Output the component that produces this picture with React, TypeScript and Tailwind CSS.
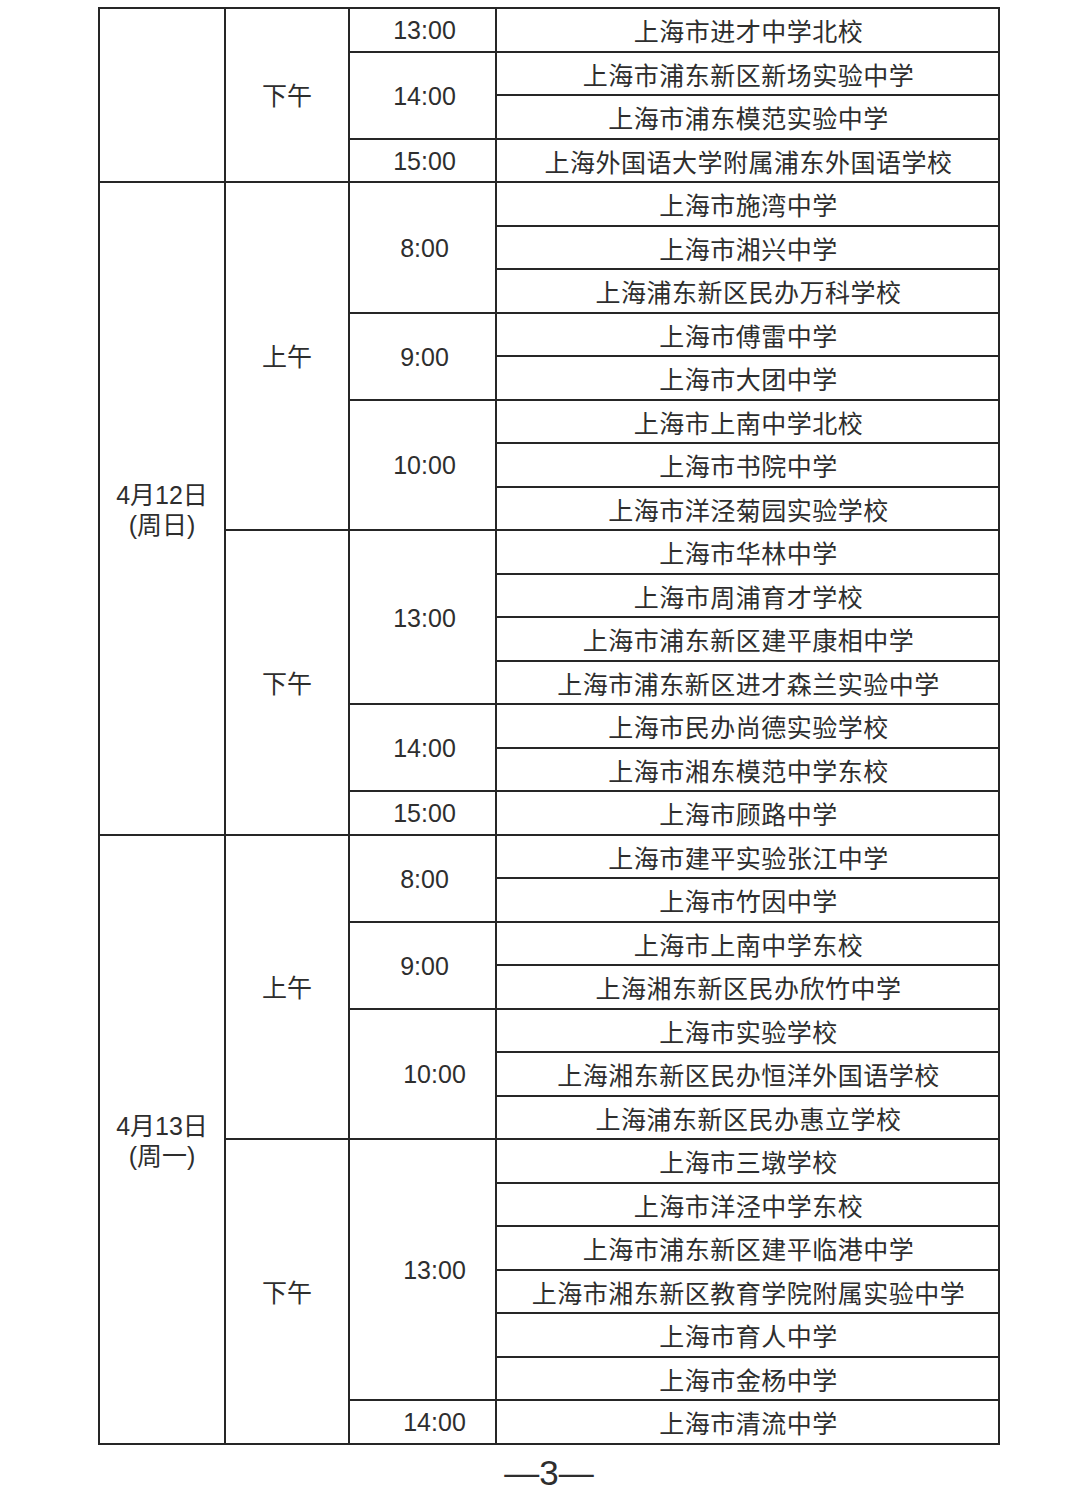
type TimeBlock = { time: string; schools: string[]; shift?: boolean };
type Period = { label: string; times: TimeBlock[] };
type Day = { date?: [string, string]; periods: Period[] };

const DAYS: Day[] = [
  {
    periods: [
      {
        label: "下午",
        times: [
          { time: "13:00", schools: ["上海市进才中学北校"] },
          { time: "14:00", schools: ["上海市浦东新区新场实验中学", "上海市浦东模范实验中学"] },
          { time: "15:00", schools: ["上海外国语大学附属浦东外国语学校"] },
        ],
      },
    ],
  },
  {
    date: ["4月12日", "(周日)"],
    periods: [
      {
        label: "上午",
        times: [
          { time: "8:00", schools: ["上海市施湾中学", "上海市湘兴中学", "上海浦东新区民办万科学校"] },
          { time: "9:00", schools: ["上海市傅雷中学", "上海市大团中学"] },
          { time: "10:00", schools: ["上海市上南中学北校", "上海市书院中学", "上海市洋泾菊园实验学校"] },
        ],
      },
      {
        label: "下午",
        times: [
          {
            time: "13:00",
            schools: [
              "上海市华林中学",
              "上海市周浦育才学校",
              "上海市浦东新区建平康相中学",
              "上海市浦东新区进才森兰实验中学",
            ],
          },
          { time: "14:00", schools: ["上海市民办尚德实验学校", "上海市湘东模范中学东校"] },
          { time: "15:00", schools: ["上海市顾路中学"] },
        ],
      },
    ],
  },
  {
    date: ["4月13日", "(周一)"],
    periods: [
      {
        label: "上午",
        times: [
          { time: "8:00", schools: ["上海市建平实验张江中学", "上海市竹因中学"] },
          { time: "9:00", schools: ["上海市上南中学东校", "上海湘东新区民办欣竹中学"] },
          {
            time: "10:00",
            shift: true,
            schools: ["上海市实验学校", "上海湘东新区民办恒洋外国语学校", "上海浦东新区民办惠立学校"],
          },
        ],
      },
      {
        label: "下午",
        times: [
          {
            time: "13:00",
            shift: true,
            schools: [
              "上海市三墩学校",
              "上海市洋泾中学东校",
              "上海市浦东新区建平临港中学",
              "上海市湘东新区教育学院附属实验中学",
              "上海市育人中学",
              "上海市金杨中学",
            ],
          },
          { time: "14:00", shift: true, schools: ["上海市清流中学"] },
        ],
      },
    ],
  },
];

export default function App() {
  return (
    <div
      className="min-h-[1495px] w-[1080px] bg-white pt-[7px] text-[#2e2e2e]"
      style={{ fontFamily: '"Liberation Sans", "Noto Sans CJK SC", sans-serif' }}
    >
      <div className="ml-[98px] flex w-[902px] flex-col gap-[2px] bg-[#262626] p-[2px]">
        {DAYS.map((day, di) => (
          <div key={di} className="flex gap-[2px]">
            <div className="flex w-[124px] flex-col items-center justify-center bg-white pt-[4px] text-[25px] leading-[30px]">
              {day.date && (
                <>
                  <span>{day.date[0]}</span>
                  <span>{day.date[1]}</span>
                </>
              )}
            </div>
            <div className="flex flex-1 flex-col gap-[2px]">
              {day.periods.map((p, pi) => (
                <div key={pi} className="flex gap-[2px]">
                  <div className="flex w-[122px] items-center justify-center bg-white pt-[4px] text-[25px]">
                    {p.label}
                  </div>
                  <div className="flex flex-1 flex-col gap-[2px]">
                    {p.times.map((t, ti) => (
                      <div key={ti} className="flex gap-[2px]">
                        <div
                          className={
                            t.shift
                              ? "flex w-[145px] items-center justify-center bg-white pt-[2px] pl-[24px] text-[25px] leading-none"
                              : "flex w-[145px] items-center justify-center bg-white pt-[2px] pl-[4px] text-[25px] leading-none"
                          }
                        >
                          {t.time}
                        </div>
                        <div className="flex flex-1 flex-col gap-[2px]">
                          {t.schools.map((s) => (
                            <div
                              key={s}
                              className="flex h-[41.5px] items-center justify-center bg-white pt-[6px] pl-[2px] text-[25px] leading-none tracking-[0.5px]"
                            >
                              {s}
                            </div>
                          ))}
                        </div>
                      </div>
                    ))}
                  </div>
                </div>
              ))}
            </div>
          </div>
        ))}
      </div>
      <div className="ml-[98px] mt-[10px] w-[902px] text-center text-[35px] leading-[35px]">
        —3—
      </div>
    </div>
  );
}
